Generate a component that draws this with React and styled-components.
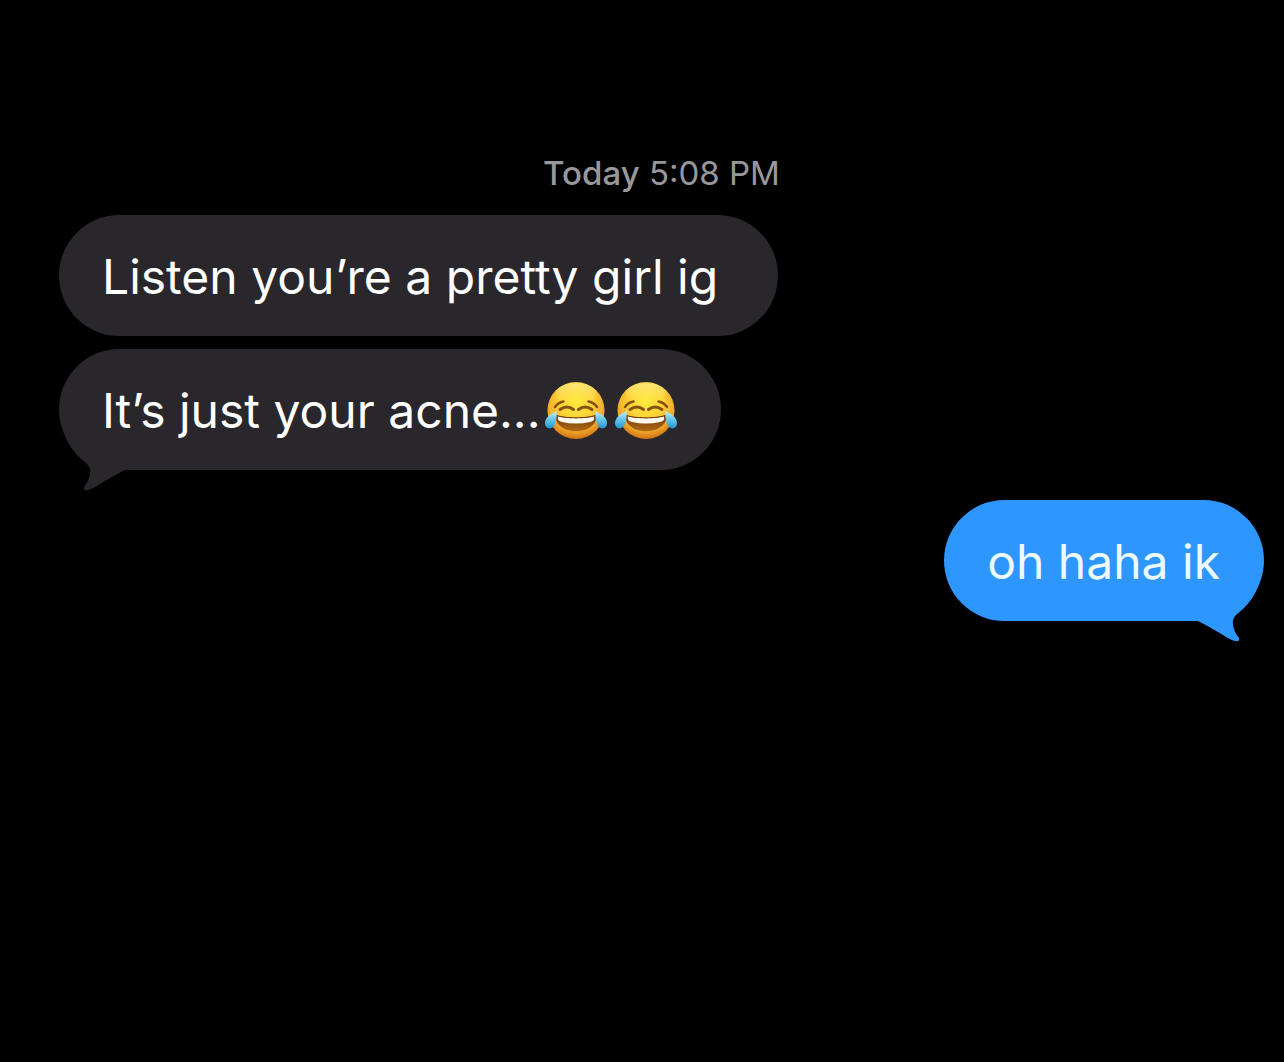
import React from "react";
import styled, { createGlobalStyle } from "styled-components";

const GlobalStyle = createGlobalStyle`
  body {
    margin: 0;
    background: #000;
    font-family: Inter, "Liberation Sans", sans-serif;
  }
`;

const Conversation = styled.main`
  display: flex;
  flex-direction: column;
  box-sizing: border-box;
  min-height: 100vh;
  padding: 153px 20px 40px 59px;
  background: #000;
`;

const Timestamp = styled.time`
  align-self: center;
  margin-bottom: 22px;
  color: #98989c;
  font-size: 33px;
  line-height: 40px;
`;

const Day = styled.span`
  font-weight: 500;
`;

const Thread = styled.div`
  display: flex;
  flex-direction: column;
  gap: 30px;
`;

const Group = styled.div`
  display: flex;
  flex-direction: column;
  align-items: ${({ $sent }) => ($sent ? "flex-end" : "flex-start")};
  gap: 13px;
`;

const Bubble = styled.div`
  position: relative;
  display: flex;
  align-items: center;
  box-sizing: border-box;
  min-height: 121px;
  padding: 31px ${({ $roomy }) => ($roomy ? "60px" : "44px")} 29px 43px;
  border-radius: 64px;
  background: ${({ $sent }) => ($sent ? "#2e96ff" : "#29272c")};
  color: ${({ $sent }) => ($sent ? "#ecfbff" : "#fff")};
`;

const Message = styled.p`
  margin: 0;
  font-size: 48px;
  line-height: 60px;
`;

const TailShape = styled.svg`
  position: absolute;
  top: 78px;
  ${({ $sent }) => ($sent ? "right: 0;" : "left: 0;")}
  width: 80px;
  height: 64px;
  fill: ${({ $sent }) => ($sent ? "#2e96ff" : "#29272c")};
`;

const EmojiRow = styled.span`
  display: flex;
  gap: 8px;
  margin-left: 4px;
`;

const EmojiArt = styled.svg`
  width: 62px;
  height: 60px;
`;

function Tail({ sent }) {
  return (
    <TailShape $sent={sent} viewBox="0 0 80 64" aria-hidden="true">
      <path
        transform={sent ? "translate(80 0) scale(-1 1)" : undefined}
        d="M4 2C7 14 13 23 20 30L28 37Q32 41 31 47Q30 54 25 60Q24 64 29 63C36 61 40 57 46 54Q56 48 66 43L80 42V2Z"
      />
    </TailShape>
  );
}

function JoyEmoji({ id }) {
  return (
    <EmojiArt viewBox="0 0 62 60" role="img" aria-label="face with tears of joy">
      <defs>
        <radialGradient id={`${id}-face`} cx="50%" cy="34%" r="66%">
          <stop offset="0" stopColor="#ffea3e" />
          <stop offset="0.45" stopColor="#fdd338" />
          <stop offset="0.8" stopColor="#f0a62a" />
          <stop offset="1" stopColor="#cf7213" />
        </radialGradient>
        <linearGradient id={`${id}-shine`} x1="0" y1="0" x2="0" y2="1">
          <stop offset="0" stopColor="#fff6b0" stopOpacity="0.55" />
          <stop offset="1" stopColor="#fff36a" stopOpacity="0" />
        </linearGradient>
        <linearGradient id={`${id}-mouth`} x1="0" y1="0" x2="0" y2="1">
          <stop offset="0" stopColor="#6b380c" />
          <stop offset="1" stopColor="#b06a14" />
        </linearGradient>
        <linearGradient id={`${id}-tear`} x1="0" y1="0" x2="0" y2="1">
          <stop offset="0" stopColor="#c5eff8" />
          <stop offset="0.5" stopColor="#64c5e9" />
          <stop offset="1" stopColor="#2795d0" />
        </linearGradient>
      </defs>
      <circle cx="31" cy="29.5" r="28.5" fill={`url(#${id}-face)`} />
      <ellipse cx="31" cy="12" rx="20" ry="10" fill={`url(#${id}-shine)`} />
      <g fill="none" stroke="#86500f" strokeLinecap="round">
        <path
          d="M10 26Q13 21.5 18.5 20.5M43.5 20.5Q49 21.5 52 26"
          strokeWidth="2.4"
        />
        <path
          d="M15 28.5Q22 23.5 28.5 28.5M33.5 28.5Q40 23.5 47 28.5"
          strokeWidth="3"
        />
      </g>
      <path
        d="M12 34C20 37 42 37 50 34C52 33 53 36 51 39C46 54 16 54 11 39C9 36 10 33 12 34Z"
        fill={`url(#${id}-mouth)`}
      />
      <path
        d="M13 35.5C21 38 41 38 49 35.5Q50 40 45 41Q31 44 17 41Q12 40 13 35.5Z"
        fill="#fffaf0"
      />
      <path
        d="M12 30C5 33 0 37 0 42C0 49 8 49 10 43Q12 37 12 30Z"
        fill={`url(#${id}-tear)`}
      />
      <path
        d="M50 30C57 33 62 37 62 42C62 49 54 49 52 43Q50 37 50 30Z"
        fill={`url(#${id}-tear)`}
      />
    </EmojiArt>
  );
}

export default function App() {
  return (
    <>
      <GlobalStyle />
      <Conversation>
        <Timestamp dateTime="17:08">
          <Day>Today</Day> 5:08 PM
        </Timestamp>
        <Thread>
          <Group>
            <Bubble $roomy>
              <Message>Listen you’re a pretty girl ig</Message>
            </Bubble>
            <Bubble>
              <Tail />
              <Message>It’s just your acne...</Message>
              <EmojiRow>
                <JoyEmoji id="joy-one" />
                <JoyEmoji id="joy-two" />
              </EmojiRow>
            </Bubble>
          </Group>
          <Group $sent>
            <Bubble $sent>
              <Tail sent />
              <Message>oh haha ik</Message>
            </Bubble>
          </Group>
        </Thread>
      </Conversation>
    </>
  );
}
